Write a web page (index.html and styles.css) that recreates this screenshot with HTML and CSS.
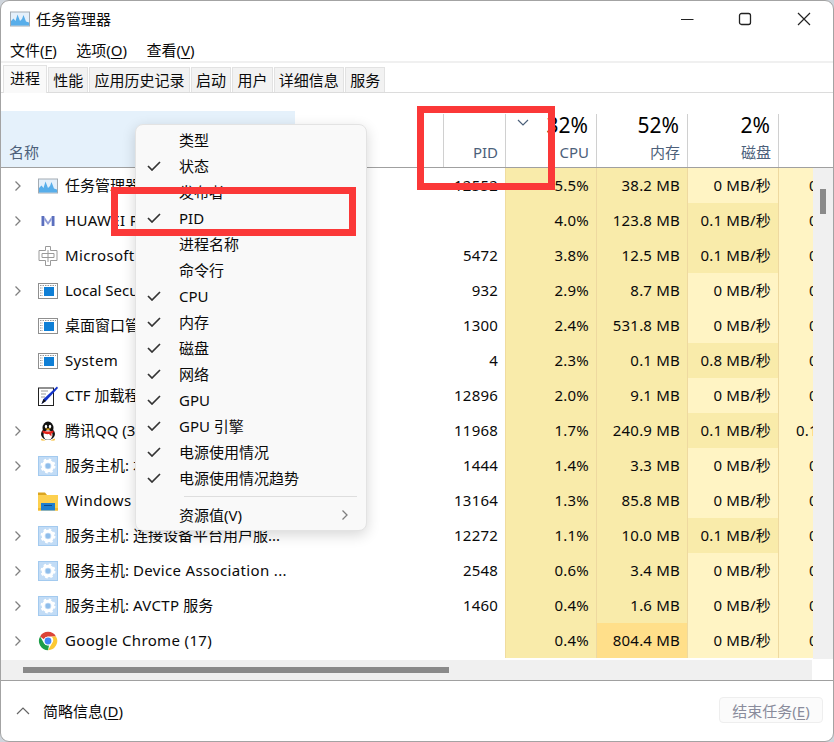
FILE: index.html
```html
<!DOCTYPE html>
<html lang="zh-CN">
<head>
<meta charset="utf-8">
<title>任务管理器</title>
<link rel="stylesheet" href="styles.css">
</head>
<body>
<svg class="defs" width="0" height="0" aria-hidden="true">
  <symbol id="i-tm" viewBox="0 0 20 20">
    <rect x="0.5" y="3" width="19" height="14" fill="#e4f0fb" stroke="#a3abb3"/>
    <path d="M1 16.5V12L3.5 9.5 5.5 12 7.5 5.5 10 12 12 10 13.5 6 16 12.5 19 13.5V16.5Z" fill="#58aeea"/>
  </symbol>
  <symbol id="i-hw" viewBox="0 0 20 20">
    <path d="M3.500 5h2.800v10H3.500zM13.700 5h2.800v10h-2.800z" fill="#5b6fbe"/>
    <path d="M6.300 5.500 10 11l3.700-5.500v3.400L10 14 6.300 8.900Z" fill="#8d9ad6"/>
  </symbol>
  <symbol id="i-ime" viewBox="0 0 20 20">
    <path d="M7.5.5h5v4h6.500v10h-6.500v5h-5v-5H1v-10h6.500Z" fill="#fff" stroke="#9a9a9a"/>
    <path d="M4 7.500h12v4H4ZM10 4v12" fill="none" stroke="#9a9a9a"/>
  </symbol>
  <symbol id="i-app" viewBox="0 0 20 20">
    <rect x="0.500" y="2.500" width="19" height="15" fill="#fff" stroke="#8f8f8f"/>
    <rect x="6" y="6" width="10" height="9" fill="#0f7fd6"/>
    <path d="M2 4.500h16M2 7h3M2 9.500h3M2 12h3M2 14.500h3" stroke="#9a9a9a" stroke-dasharray="1.500 1"/>
  </symbol>
  <symbol id="i-ctf" viewBox="0 0 20 20">
    <rect x="0.500" y="2" width="15" height="17.500" fill="#fff" stroke="#222"/>
    <path d="M3 5h7M3 8h5M3 11h4" stroke="#999"/>
    <path d="M19 0.500 20 2 8 15 3.500 18 5.500 13Z" fill="#1434c8"/>
    <path d="M3.500 18 5.500 13 8 15Z" fill="#111"/>
  </symbol>
  <symbol id="i-qq" viewBox="0 0 20 20">
    <ellipse cx="10" cy="7" rx="5.500" ry="6.500" fill="#111"/>
    <ellipse cx="10" cy="13" rx="7" ry="6" fill="#111"/>
    <ellipse cx="10" cy="14" rx="4.500" ry="4.800" fill="#fff"/>
    <ellipse cx="8" cy="5.500" rx="1.200" ry="1.700" fill="#fff"/>
    <ellipse cx="12" cy="5.500" rx="1.200" ry="1.700" fill="#fff"/>
    <path d="M7 7.500h6L10 9.300Z" fill="#f6b51e"/>
    <path d="M4.500 9.500c3.500 1.300 7.500 1.300 11 0v2l-2 1v3l-2.500-2.500c-2 .4-4.500 0-6.500-1.500Z" fill="#e2231a"/>
    <path d="M3 17.500 7.500 19.500H3.500ZM17 17.500 12.500 19.500H16.500Z" fill="#f6b51e"/>
  </symbol>
  <symbol id="i-svc" viewBox="0 0 20 20">
    <rect width="20" height="20" fill="#a3caef"/>
    <rect x="1" y="1" width="18" height="18" fill="#c2dcf6"/>
    <circle cx="10" cy="10" r="4.800" fill="none" stroke="#fff" stroke-width="3"/>
    <circle cx="10" cy="10" r="6.500" fill="none" stroke="#fff" stroke-width="2" stroke-dasharray="2.500 2.600"/>
    <circle cx="10" cy="10" r="2.400" fill="#8fbdea"/>
  </symbol>
  <symbol id="i-folder" viewBox="0 0 20 20">
    <path d="M0 1.500h7l2 2.500h11v3H0Z" fill="#dba520"/>
    <rect y="4" width="20" height="15.500" fill="#fdd04f"/>
    <path d="M3 12h14v7.500H3Z" fill="#1f7fd0"/>
    <path d="M6 14h8v1H6Z" fill="#0d4a8c"/>
    <path d="M0 17h3v2.500H0ZM17 17h3v2.500h-3Z" fill="#f2b92f"/>
  </symbol>
  <symbol id="i-chrome" viewBox="0 0 20 20">
    <path d="M10 .8a9.200 9.200 0 0 1 8 4.600H10a4.600 4.600 0 0 0-4.200 2.800L2.100 5.400A9.200 9.200 0 0 1 10 .8Z" fill="#db4437"/>
    <path d="M18 5.400a9.200 9.200 0 0 1-8 13.800l4-7A4.600 4.600 0 0 0 13.500 5.400Z" fill="#fcc934"/>
    <path d="M2.100 5.400 6 12.200a4.600 4.600 0 0 0 5 2.200l-1 4.800A9.200 9.200 0 0 1 2.100 5.400Z" fill="#1e9e4a"/>
    <circle cx="10" cy="10" r="4.300" fill="#fff"/>
    <circle cx="10" cy="10" r="3.400" fill="#4285f4"/>
  </symbol>
  <symbol id="i-exp" viewBox="0 0 8 12">
    <path d="M1.500 1.500 6 6l-4.500 4.500" fill="none" stroke="#7f7f7f" stroke-width="1.300"/>
  </symbol>
  <symbol id="i-chk" viewBox="0 0 14 10">
    <path d="M1 5l4 4 8-8" fill="none" stroke="#333" stroke-width="1.700"/>
  </symbol>
</svg>

<div class="window">
  <header class="titlebar">
    <svg class="ico"><use href="#i-tm"/></svg>
    <span class="title">任务管理器</span>
    <div class="controls">
      <svg class="ctl" viewBox="0 0 14 14"><path d="M0 7.500h12.500" stroke="#222" stroke-width="1.200"/></svg>
      <svg class="ctl ctl-max" viewBox="0 0 14 14"><rect x="1.500" y="1.500" width="11" height="11" rx="2" fill="none" stroke="#222" stroke-width="1.300"/></svg>
      <svg class="ctl" viewBox="0 0 14 14"><path d="M1 1l12 12M13 1 1 13" stroke="#222" stroke-width="1.200"/></svg>
    </div>
  </header>

  <nav class="menubar">
    <span>文件(<u>F</u>)</span>
    <span>选项(<u>O</u>)</span>
    <span>查看(<u>V</u>)</span>
  </nav>

  <div class="tabs">
    <span class="tab active">进程</span>
    <span class="tab">性能</span>
    <span class="tab">应用历史记录</span>
    <span class="tab">启动</span>
    <span class="tab">用户</span>
    <span class="tab">详细信息</span>
    <span class="tab">服务</span>
  </div>

  <div class="thead cols">
    <div class="th th-name"><span class="lbl">名称</span></div>
    <div class="th th-sep"></div>
    <div class="th th-sep"><span class="lbl">PID</span></div>
    <div class="th th-sep">
      <svg class="sort" viewBox="0 0 12 7"><path d="M1 1l5 5 5-5" fill="none" stroke="#4c607a" stroke-width="1.200"/></svg>
      <span class="pct">32%</span><span class="lbl">CPU</span>
    </div>
    <div class="th th-sep"><span class="pct">52%</span><span class="lbl">内存</span></div>
    <div class="th th-sep"><span class="pct">2%</span><span class="lbl">磁盘</span></div>
    <div class="th"><span class="pct">0%</span><span class="lbl">网络</span></div>
  </div>

  <div class="content">
    <div class="rows">
      <div class="row cols"><div class="name"><span class="exp"><svg class="chev"><use href="#i-exp"/></svg></span><svg class="ico"><use href="#i-tm"/></svg><span>任务管理器</span></div><div class="c"></div><div class="c pid">12552</div><div class="c y">5.5%</div><div class="c y">38.2 MB</div><div class="c l">0 MB/秒</div><div class="c l">0 Mbps</div></div>
      <div class="row cols"><div class="name"><span class="exp"><svg class="chev"><use href="#i-exp"/></svg></span><svg class="ico"><use href="#i-hw"/></svg><span class="lt">HUAWEI PC Manager</span></div><div class="c"></div><div class="c pid"></div><div class="c y">4.0%</div><div class="c y">123.8 MB</div><div class="c y">0.1 MB/秒</div><div class="c l">0 Mbps</div></div>
      <div class="row cols"><div class="name"><span class="exp"></span><svg class="ico"><use href="#i-ime"/></svg><span class="lt">Microsoft IME</span></div><div class="c"></div><div class="c pid">5472</div><div class="c y">3.8%</div><div class="c y">12.5 MB</div><div class="c y">0.1 MB/秒</div><div class="c l">0 Mbps</div></div>
      <div class="row cols"><div class="name"><span class="exp"><svg class="chev"><use href="#i-exp"/></svg></span><svg class="ico"><use href="#i-app"/></svg><span>Local Security Authority</span></div><div class="c"></div><div class="c pid">932</div><div class="c y">2.9%</div><div class="c y">8.7 MB</div><div class="c l">0 MB/秒</div><div class="c l">0 Mbps</div></div>
      <div class="row cols"><div class="name"><span class="exp"></span><svg class="ico"><use href="#i-app"/></svg><span>桌面窗口管理器</span></div><div class="c"></div><div class="c pid">1300</div><div class="c y">2.4%</div><div class="c y">531.8 MB</div><div class="c l">0 MB/秒</div><div class="c l">0 Mbps</div></div>
      <div class="row cols"><div class="name"><span class="exp"></span><svg class="ico"><use href="#i-app"/></svg><span class="lt">System</span></div><div class="c"></div><div class="c pid">4</div><div class="c y">2.3%</div><div class="c y">0.1 MB</div><div class="c y">0.8 MB/秒</div><div class="c l">0 Mbps</div></div>
      <div class="row cols"><div class="name"><span class="exp"></span><svg class="ico"><use href="#i-ctf"/></svg><span>CTF 加载程序</span></div><div class="c"></div><div class="c pid">12896</div><div class="c y">2.0%</div><div class="c y">9.1 MB</div><div class="c l">0 MB/秒</div><div class="c l">0 Mbps</div></div>
      <div class="row cols"><div class="name"><span class="exp"><svg class="chev"><use href="#i-exp"/></svg></span><svg class="ico"><use href="#i-qq"/></svg><span>腾讯QQ (32 位)</span></div><div class="c"></div><div class="c pid">11968</div><div class="c y">1.7%</div><div class="c y">240.9 MB</div><div class="c y">0.1 MB/秒</div><div class="c l">0.1 Mbps</div></div>
      <div class="row cols"><div class="name"><span class="exp"><svg class="chev"><use href="#i-exp"/></svg></span><svg class="ico"><use href="#i-svc"/></svg><span>服务主机: 本地服务</span></div><div class="c"></div><div class="c pid">1444</div><div class="c y">1.4%</div><div class="c y">3.3 MB</div><div class="c l">0 MB/秒</div><div class="c l">0 Mbps</div></div>
      <div class="row cols"><div class="name"><span class="exp"></span><svg class="ico"><use href="#i-folder"/></svg><span><span class="lt">Windows</span> 资源管理器</span></div><div class="c"></div><div class="c pid">13164</div><div class="c y">1.3%</div><div class="c y">85.8 MB</div><div class="c l">0 MB/秒</div><div class="c l">0 Mbps</div></div>
      <div class="row cols"><div class="name"><span class="exp"><svg class="chev"><use href="#i-exp"/></svg></span><svg class="ico"><use href="#i-svc"/></svg><span>服务主机: 连接设备平台用户服...</span></div><div class="c"></div><div class="c pid">12272</div><div class="c y">1.1%</div><div class="c y">10.0 MB</div><div class="c y">0.1 MB/秒</div><div class="c l">0 Mbps</div></div>
      <div class="row cols"><div class="name"><span class="exp"><svg class="chev"><use href="#i-exp"/></svg></span><svg class="ico"><use href="#i-svc"/></svg><span>服务主机: <span class="lt">Device Association ...</span></span></div><div class="c"></div><div class="c pid">2548</div><div class="c y">0.6%</div><div class="c y">3.4 MB</div><div class="c l">0 MB/秒</div><div class="c l">0 Mbps</div></div>
      <div class="row cols"><div class="name"><span class="exp"><svg class="chev"><use href="#i-exp"/></svg></span><svg class="ico"><use href="#i-svc"/></svg><span>服务主机: <span class="lt">AVCTP</span> 服务</span></div><div class="c"></div><div class="c pid">1460</div><div class="c y">0.4%</div><div class="c y">1.6 MB</div><div class="c l">0 MB/秒</div><div class="c l">0 Mbps</div></div>
      <div class="row cols"><div class="name"><span class="exp"><svg class="chev"><use href="#i-exp"/></svg></span><svg class="ico"><use href="#i-chrome"/></svg><span class="lt">Google Chrome (17)</span></div><div class="c"></div><div class="c pid"></div><div class="c y">0.4%</div><div class="c o">804.4 MB</div><div class="c l">0 MB/秒</div><div class="c l">0 Mbps</div></div>
    </div>
    <div class="vscroll"><div class="vthumb"></div></div>
  </div>

  <div class="hbar">
    <div class="hscroll"><div class="hthumb"></div></div>
  </div>

  <footer class="footer">
    <svg class="up" viewBox="0 0 14 8"><path d="M1 7l6-6 6 6" fill="none" stroke="#666" stroke-width="1.200"/></svg>
    <span class="less">简略信息(<u>D</u>)</span>
    <button class="end" type="button" disabled>结束任务(<u>E</u>)</button>
  </footer>

  <div class="menu">
    <div class="mi"><span class="chk"></span>类型</div>
    <div class="mi"><span class="chk"><svg class="tick"><use href="#i-chk"/></svg></span>状态</div>
    <div class="mi"><span class="chk"></span>发布者</div>
    <div class="mi"><span class="chk"><svg class="tick"><use href="#i-chk"/></svg></span>PID</div>
    <div class="mi"><span class="chk"></span>进程名称</div>
    <div class="mi"><span class="chk"></span>命令行</div>
    <div class="mi"><span class="chk"><svg class="tick"><use href="#i-chk"/></svg></span>CPU</div>
    <div class="mi"><span class="chk"><svg class="tick"><use href="#i-chk"/></svg></span>内存</div>
    <div class="mi"><span class="chk"><svg class="tick"><use href="#i-chk"/></svg></span>磁盘</div>
    <div class="mi"><span class="chk"><svg class="tick"><use href="#i-chk"/></svg></span>网络</div>
    <div class="mi"><span class="chk"><svg class="tick"><use href="#i-chk"/></svg></span>GPU</div>
    <div class="mi"><span class="chk"><svg class="tick"><use href="#i-chk"/></svg></span>GPU 引擎</div>
    <div class="mi"><span class="chk"><svg class="tick"><use href="#i-chk"/></svg></span>电源使用情况</div>
    <div class="mi"><span class="chk"><svg class="tick"><use href="#i-chk"/></svg></span>电源使用情况趋势</div>
    <div class="msep"></div>
    <div class="mi"><span class="chk"></span>资源值(V)<svg class="msub"><use href="#i-exp"/></svg></div>
  </div>

  <div class="mark mark-head"></div>
  <div class="mark mark-pid"></div>
</div>
</body>
</html>
```

FILE: styles.css
```css
* { box-sizing: border-box; }
html, body { margin: 0; padding: 0; height: 100%; overflow: hidden; }
body {
  background: #cfd5dc;
  font-family: "Noto Sans", "Noto Sans CJK SC", sans-serif;
  font-size: 15px;
  color: #0a0a0a;
}
.defs { position: absolute; }
u { text-underline-offset: 2px; text-decoration-thickness: 1px; }
.lt { letter-spacing: .35px; }

.window {
  position: relative;
  width: 834px;
  height: 742px;
  background: #fff;
  border: 1px solid #a3a3a3;
  border-radius: 9px;
  overflow: hidden;
  display: flex;
  flex-direction: column;
}
.ico { width: 20px; height: 20px; flex: none; }

.titlebar { height: 39px; flex: none; display: flex; align-items: center; padding: 0 22px 3px 9px; gap: 6px; }
.title { font-size: 15px; margin-top: -2px; }
.controls { margin-left: auto; display: flex; align-items: center; gap: 45px; }
.ctl { width: 14px; height: 14px; }
.ctl-max { margin-left: -2px; }

.menubar { height: 21px; flex: none; display: flex; gap: 19.500px; padding-left: 9px; align-items: center; line-height: 21px; }
.tabs {
  height: 32px; flex: none;
  display: flex; align-items: flex-end; gap: 1px;
  border-top: 2px solid #f0f0f0;
  border-bottom: 1px solid #dcdcdc;
  padding-left: 2px;
}
.tab {
  height: 25px; line-height: 24px;
  padding: 0 4.200px;
  background: #f2f2f2;
  border: 1px solid #e2e2e2; border-bottom: 0;
}
.tab.active { height: 28px; line-height: 24px; background: #f9f9f9; padding: 0 6px 2px; border-bottom: 0; margin-bottom: -1px; }

.cols { display: grid; grid-template-columns: 294px 149px 62px 91px 91px 91px 91px; }

.thead { height: 75px; flex: none; border-bottom: 1px solid #a0a0a0; overflow: hidden; }
.th {
  position: relative;
  height: 53px; margin-top: 21px;
  display: flex; flex-direction: column; justify-content: flex-end; align-items: flex-end;
  padding: 0 7px 5px 8px;
}
.th-sep { border-right: 1px solid #d0d0d0; }
.th-name { margin-top: 18px; height: 56px; background: #e5f1fb; align-items: flex-start; }
.lbl { color: #4c607a; font-size: 15px; line-height: 20px; }
.pct { font-size: 21px; line-height: 26px; margin-bottom: 4px; margin-right: 1px; color: #000; }
.sort { position: absolute; left: 11px; top: 5px; width: 12px; height: 7px; }

.content { height: 491px; flex: none; display: flex; }
.rows { width: 812px; flex: none; overflow: hidden; }
.row { height: 35px; }
.name { display: flex; align-items: center; min-width: 0; white-space: nowrap; overflow: hidden; }
.exp { width: 37px; flex: none; padding-left: 13px; display: flex; align-items: center; }
.chev { width: 8px; height: 12px; }
.name .ico + span { margin-left: 7px; margin-bottom: 2px; }
.c {
  line-height: 35px; text-align: right; white-space: nowrap;
  padding-right: 7px;
  display: flex; justify-content: flex-end;
  border-right: 1px solid transparent;
  letter-spacing: .2px;
}
.pid { border-right-color: #f0dca0; }
.y { background: #f9ebaa; border-right-color: #eed9a0; }
.l { background: #fff4c4; border-right-color: #eed9a0; }
.o { background: #ffdf8a; border-right-color: #eed9a0; }

.vscroll { width: 20px; flex: none; background: #f0f0f0; padding: 21px 0 0 7px; }
.vthumb { width: 6px; height: 25px; background: #8a8a8a; }

.hbar { height: 21px; flex: none; padding-top: 1px; }
.hscroll { width: 811px; height: 20px; background: #f0f0f0; padding: 7px 0 0 22px; }
.hthumb { width: 426px; height: 6px; background: #8a8a8a; }

.footer { flex: 1; min-height: 0; border-top: 1px solid #a0a0a0; display: flex; align-items: center; padding: 0 10px 2px 15px; }
.up { width: 14px; height: 8px; flex: none; margin-top: 2px; }
.less { margin-left: 13px; }
.end {
  margin-left: auto;
  width: 104px; height: 26px;
  font: inherit; color: #8a8c9c;
  background: #fbfbfb;
  border: 1px solid #eeeeee; border-radius: 4px;
  padding: 0;
}

.menu {
  position: absolute; left: 134px; top: 123px;
  width: 232px; height: 407px;
  padding: 2px 0 1px;
  background: #f9f9f9;
  border: 1px solid #e3e3e3; border-radius: 8px;
  box-shadow: 0 4px 14px rgba(0,0,0,.16);
}
.mi { position: relative; height: 26px; line-height: 26px; display: flex; align-items: center; white-space: nowrap; }
.chk { width: 43px; padding-left: 11px; flex: none; display: flex; align-items: center; }
.tick { width: 14px; height: 10px; }
.msep { height: 1px; margin: 5px 9px 5px 48px; background: #dedede; }
.msub { position: absolute; right: 17px; top: 7px; width: 8px; height: 12px; }

.mark { position: absolute; border: 7px solid #fb3838; }
.mark-head { left: 416px; top: 105px; width: 138px; height: 84px; }
.mark-pid { left: 110px; top: 186px; width: 245px; height: 49px; }
```
